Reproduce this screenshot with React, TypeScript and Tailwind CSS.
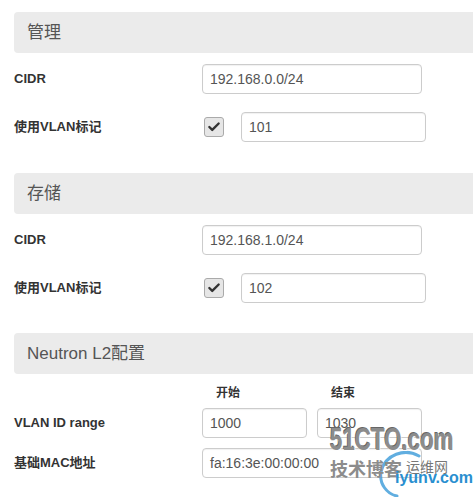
import { Check } from 'lucide-react'

const font = { fontFamily: '"Liberation Sans", "Noto Sans CJK SC", sans-serif' }

function SectionHeader({ title }: { title: string }): JSX.Element {
  return (
    <div className="flex h-[41px] w-[480px] items-center rounded-l-[4px] bg-[#ebebeb] pl-[13px] text-[17px] text-[#555]">
      {title}
    </div>
  )
}

function TextInput({ value, width }: { value: string; width: string }): JSX.Element {
  return (
    <div
      className={`flex h-[30px] items-center rounded-[4px] border border-[#ccc] bg-white pl-[7px] text-[14px] text-[#555] shadow-[inset_0_1px_1px_rgba(0,0,0,0.06)] ${width}`}
    >
      {value}
    </div>
  )
}

function FieldRow({ label, children, className = '' }: { label: string; children: React.ReactNode; className?: string }): JSX.Element {
  return (
    <div className={`flex items-center ${className}`}>
      <div className="w-[188px] text-[13px] font-bold text-[#333]">{label}</div>
      {children}
    </div>
  )
}

function VlanRow({ value }: { value: string }): JSX.Element {
  return (
    <FieldRow label="使用VLAN标记" className="mt-[18px]">
      <div className="ml-[2px] flex h-[20px] w-[20px] items-center justify-center rounded-[3px] border border-[#aaa] bg-[#e6e6e6]">
        <Check size={14} strokeWidth={4} className="text-[#333]" />
      </div>
      <div className="ml-[17px]">
        <TextInput value={value} width="w-[185px]" />
      </div>
    </FieldRow>
  )
}

export default function App(): JSX.Element {
  return (
    <div className="relative h-[497px] w-[473px] overflow-hidden bg-white" style={font}>
      <div className="flex flex-col pl-[14px] pt-[12px]">
        <SectionHeader title="管理" />
        <FieldRow label="CIDR" className="mt-[11px]">
          <TextInput value="192.168.0.0/24" width="w-[220px]" />
        </FieldRow>
        <VlanRow value="101" />

        <div className="mt-[31px]">
          <SectionHeader title="存储" />
        </div>
        <FieldRow label="CIDR" className="mt-[11px]">
          <TextInput value="192.168.1.0/24" width="w-[220px]" />
        </FieldRow>
        <VlanRow value="102" />

        <div className="mt-[30px]">
          <SectionHeader title="Neutron L2配置" />
        </div>
        <div className="mt-[10px] flex text-[12px] font-bold text-[#333]">
          <div className="w-[202px]" />
          <div className="w-[115px]">开始</div>
          <div>结束</div>
        </div>
        <FieldRow label="VLAN ID range" className="mt-[6px]">
          <TextInput value="1000" width="w-[105px]" />
          <div className="ml-[10px]">
            <TextInput value="1030" width="w-[105px]" />
          </div>
        </FieldRow>
        <FieldRow label="基础MAC地址" className="mt-[10px]">
          <TextInput value="fa:16:3e:00:00:00" width="w-[220px]" />
        </FieldRow>
      </div>

      {/* watermark */}
      <div className="pointer-events-none absolute left-[330px] top-[424px] w-[143px] select-none">
        <svg className="absolute left-[45px] top-[24px]" width="50" height="50" viewBox="0 0 50 50" fill="none">
          <path d="M44 8 C30 0 10 6 6 24 C4 36 12 46 22 48" stroke="#3a9ad8" strokeWidth="3" strokeLinecap="round" opacity="0.8" />
        </svg>
        <div className="origin-left scale-x-[0.72] whitespace-nowrap text-[31px] font-bold leading-none text-[#8c8c8c] [text-shadow:1px_1px_0_#fff,-1px_-1px_0_#666]">
          51CTO.com
        </div>
        <div className="relative mt-[6px] flex items-center gap-[4px] whitespace-nowrap">
          <span className="text-[18px] font-bold leading-none text-[#8c8c8c]">技术博客</span>
          <span className="-mt-[6px] text-[14px] leading-none text-[#777]">运维网</span>
        </div>
        <div className="absolute left-[65px] top-[46px] whitespace-nowrap text-[16px] font-bold leading-none text-[#2a8fd0]">
          iyunv.com
        </div>
      </div>
    </div>
  )
}
